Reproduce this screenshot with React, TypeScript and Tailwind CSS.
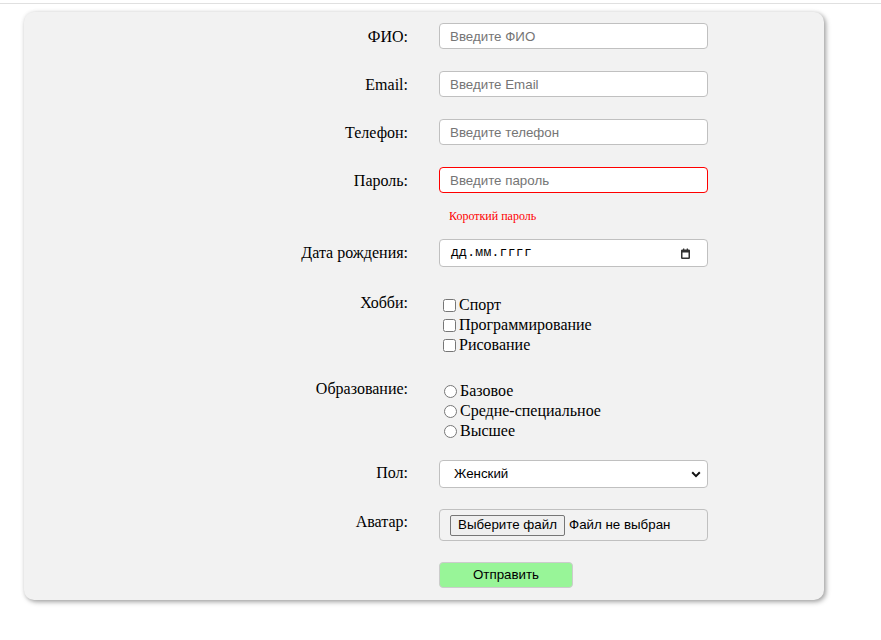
import React from 'react';

const labelCls = "w-[384px] shrink-0 text-right text-[16px] leading-[18px] text-black font-['Liberation_Serif',serif]";
const inputCls =
  "block w-[269px] h-[26px] rounded-[4px] border border-[#c0c0c0] bg-white pl-[10px] text-[13.33px] text-black font-['Liberation_Sans',Arial,sans-serif] outline-none placeholder:text-[#757575]";

function TextRow({ label, placeholder, error }: { label: string; placeholder: string; error?: boolean }) {
  return (
    <div className="flex items-start">
      <label className={labelCls + ' pt-[5px]'}>{label}</label>
      <div className="ml-[31px]">
        <input
          type="text"
          placeholder={placeholder}
          className={inputCls + (error ? ' border-[#ff0000]' : '')}
        />
      </div>
    </div>
  );
}

function CalendarIcon() {
  return (
    <svg width="9" height="11" viewBox="0 0 9 11" fill="none">
      <rect x="0.75" y="2.25" width="7.5" height="8" rx="0.5" stroke="#333" strokeWidth="1.5" />
      <rect x="0.5" y="2" width="8" height="2.5" fill="#333" />
      <rect x="2" y="0.5" width="1.3" height="2" fill="#333" />
      <rect x="5.7" y="0.5" width="1.3" height="2" fill="#333" />
    </svg>
  );
}

export default function App() {
  const hobbies = ['Спорт', 'Программирование', 'Рисование'];
  const education = ['Базовое', 'Средне-специальное', 'Высшее'];

  return (
    <div className="min-h-[640px] bg-white">
      <div className="h-[3px]" />
      <div className="h-px bg-[#e0e0e0]" />

      <form
        className="ml-[24px] mt-[8px] flex w-[800px] flex-col rounded-[10px] bg-[#f2f2f2] pt-[11px] pb-[12px] shadow-[2px_2px_5px_rgba(0,0,0,0.35),0_0_4px_rgba(0,0,0,0.08)]"
        onSubmit={(e) => e.preventDefault()}
      >
        <TextRow label="ФИО:" placeholder="Введите ФИО" />
        <div className="mt-[22px]">
          <TextRow label="Email:" placeholder="Введите Email" />
        </div>
        <div className="mt-[22px]">
          <TextRow label="Телефон:" placeholder="Введите телефон" />
        </div>
        <div className="mt-[22px]">
          <TextRow label="Пароль:" placeholder="Введите пароль" error />
        </div>

        {/* Error message */}
        <div className="mt-[16px] flex">
          <div className="w-[384px] shrink-0" />
          <div className="ml-[41px] text-[12px] leading-[14px] text-[#ff0000] font-['Liberation_Serif',serif]">
            Короткий пароль
          </div>
        </div>

        {/* Date */}
        <div className="mt-[16px] flex items-start">
          <label className={labelCls + ' pt-[5px]'}>Дата рождения:</label>
          <div className="ml-[31px] flex h-[28px] w-[269px] items-center justify-between rounded-[4px] border border-[#c0c0c0] bg-white pl-[11px] pr-[17px]">
            <span className="text-[13px] tracking-[0.3px] text-black font-['Liberation_Mono',monospace]">дд.мм.гггг</span>
            <CalendarIcon />
          </div>
        </div>

        {/* Hobbies */}
        <div className="mt-[21px] flex items-start">
          <label className={labelCls + ' pt-[6px]'}>Хобби:</label>
          <div className="ml-[31px] mt-[7px] flex flex-col">
            {hobbies.map((h) => (
              <label key={h} className="flex h-[20px] items-center text-[16px] leading-[18px] text-black font-['Liberation_Serif',serif]">
                <input type="checkbox" className="m-0 ml-[4px] mr-[3px] h-[13px] w-[13px]" />
                {h}
              </label>
            ))}
          </div>
        </div>

        {/* Education */}
        <div className="mt-[19px] flex items-start">
          <label className={labelCls + ' pt-[6px]'}>Образование:</label>
          <div className="ml-[31px] mt-[7px] flex flex-col">
            {education.map((ed) => (
              <label key={ed} className="flex h-[20px] items-center text-[16px] leading-[18px] text-black font-['Liberation_Serif',serif]">
                <input type="radio" name="edu" className="m-0 ml-[5px] mr-[3px] h-[13px] w-[13px]" />
                {ed}
              </label>
            ))}
          </div>
        </div>

        {/* Gender */}
        <div className="mt-[19px] flex items-start">
          <label className={labelCls + ' pt-[4px]'}>Пол:</label>
          <div className="ml-[31px] flex h-[28px] w-[269px] items-center justify-between rounded-[4px] border border-[#c0c0c0] bg-white pl-[14px] pr-[6px]">
            <span className="text-[13.33px] text-black font-['Liberation_Sans',Arial,sans-serif]">Женский</span>
            <svg width="10" height="7" viewBox="0 0 10 7" fill="none">
              <path d="M1.2 1.3L5 5.1L8.8 1.3" stroke="#111" strokeWidth="2" />
            </svg>
          </div>
        </div>

        {/* Avatar */}
        <div className="mt-[21px] flex items-start">
          <label className={labelCls + ' pt-[4px]'}>Аватар:</label>
          <div className="ml-[31px] flex h-[32px] w-[269px] items-center rounded-[4px] border border-[#c0c0c0] bg-[#f2f2f2] pl-[10px] text-[13.33px] text-black font-['Liberation_Sans',Arial,sans-serif]">
            <span className="flex h-[21px] w-[115px] items-center justify-center rounded-[2px] border border-[#767676] bg-[#efefef]">
              Выберите файл
            </span>
            <span className="ml-[4px]">Файл не выбран</span>
          </div>
        </div>

        {/* Submit */}
        <div className="mt-[21px] flex">
          <div className="w-[384px] shrink-0" />
          <button
            type="submit"
            className="ml-[31px] h-[26px] w-[134px] rounded-[4px] border border-[#cccccc] bg-[#98f598] text-[13.33px] text-black font-['Liberation_Sans',Arial,sans-serif]"
          >
            Отправить
          </button>
        </div>
      </form>
    </div>
  );
}
